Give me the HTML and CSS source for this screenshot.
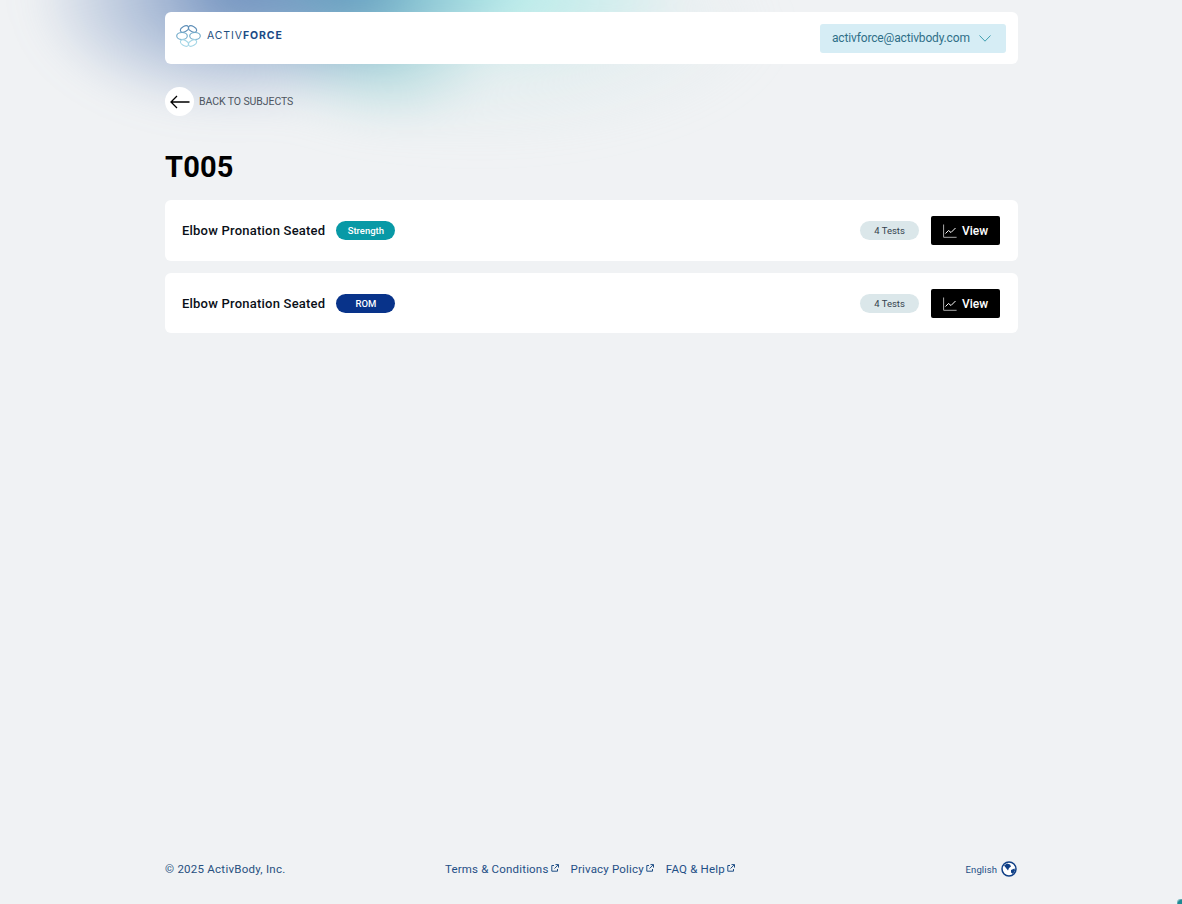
FILE: index.html
```html
<!DOCTYPE html>
<html lang="en">
<head>
<meta charset="utf-8">
<title>T005 - ActivForce</title>
<link rel="stylesheet" href="styles.css">
</head>
<body>
<div class="glow"></div>
<div class="corner"></div>
<div class="page">
  <header class="topbar">
    <a class="logo" href="#">
      <svg class="logo-mark" viewBox="0 0 25 22" width="25" height="22" fill="none" stroke-width="1.100">
        <ellipse cx="8.500" cy="4" rx="4.400" ry="2.700" transform="rotate(-30 8.500 4)" stroke="#5f8fb8"/>
        <ellipse cx="16.500" cy="4" rx="4.400" ry="2.700" transform="rotate(30 16.500 4)" stroke="#5f8fb8"/>
        <ellipse cx="6" cy="11" rx="5.300" ry="3.500" stroke="#6fa9c9"/>
        <ellipse cx="19" cy="11" rx="5.300" ry="3.500" stroke="#6fa9c9"/>
        <ellipse cx="8.500" cy="18" rx="4.400" ry="2.700" transform="rotate(30 8.500 18)" stroke="#a4d6e6"/>
        <ellipse cx="16.500" cy="18" rx="4.400" ry="2.700" transform="rotate(-30 16.500 18)" stroke="#a4d6e6"/>
      </svg>
      <span class="logo-text">ACTIV<b>FORCE</b></span>
    </a>
    <button class="account" type="button">
      <span>activforce@activbody.com</span>
      <svg class="chevron" viewBox="0 0 12 7" width="12" height="7" fill="none" stroke="#3f9fb0" stroke-width="1"><path d="M.5.5 6 6.200 11.500.5"/></svg>
    </button>
  </header>

  <a class="back" href="#">
    <span class="back-circle">
      <svg viewBox="0 0 20 14" width="20" height="14" fill="none" stroke="#000" stroke-width="1.300"><path d="M7 1 1 7l6 6M1 7h18.500"/></svg>
    </span>
    <span class="back-label">BACK TO SUBJECTS</span>
  </a>

  <h1 class="title">T005</h1>

  <main class="list">
    <section class="card">
      <h2 class="name">Elbow Pronation Seated</h2>
      <span class="pill pill-strength">Strength</span>
      <span class="count">4 Tests</span>
      <a class="view" href="#">
        <svg viewBox="0 0 14 14" width="14" height="14" fill="none" stroke="#fff" stroke-width="1"><path d="M.6.5v12.800h13" stroke="#aaa"/><path d="M2.500 9.500 5.500 6.500l2.500 2 4.500-4.500"/></svg>
        View
      </a>
    </section>
    <section class="card">
      <h2 class="name">Elbow Pronation Seated</h2>
      <span class="pill pill-rom">ROM</span>
      <span class="count">4 Tests</span>
      <a class="view" href="#">
        <svg viewBox="0 0 14 14" width="14" height="14" fill="none" stroke="#fff" stroke-width="1"><path d="M.6.5v12.800h13" stroke="#aaa"/><path d="M2.500 9.500 5.500 6.500l2.500 2 4.500-4.500"/></svg>
        View
      </a>
    </section>
  </main>

  <footer class="footer">
    <span class="copyright">© 2025 ActivBody, Inc.</span>
    <nav class="links">
      <a href="#">Terms &amp; Conditions<svg class="ext" viewBox="0 0 8 8" width="8" height="8" fill="none" stroke="#1f4f86" stroke-width="1"><path d="M3 1.500H.8v5.700h5.700V5M4.500.6h3v3M7.300.8 3.500 4.500"/></svg></a>
      <a href="#">Privacy Policy<svg class="ext" viewBox="0 0 8 8" width="8" height="8" fill="none" stroke="#1f4f86" stroke-width="1"><path d="M3 1.500H.8v5.700h5.700V5M4.500.6h3v3M7.300.8 3.500 4.500"/></svg></a>
      <a href="#">FAQ &amp; Help<svg class="ext" viewBox="0 0 8 8" width="8" height="8" fill="none" stroke="#1f4f86" stroke-width="1"><path d="M3 1.500H.8v5.700h5.700V5M4.500.6h3v3M7.300.8 3.500 4.500"/></svg></a>
    </nav>
    <span class="lang">English
      <svg viewBox="0 0 16 16" width="16" height="16"><circle cx="8" cy="8" r="7" fill="#fff" stroke="#0f3f86" stroke-width="1.500"/><path d="M3 4.500 6 2.500l3 1 1 2-2 1.500-1 2.500-2-2.500zM10 9l3.500-1.500.5 2-2 3.500-2-1.500z" fill="#0f3f86"/></svg>
    </span>
  </footer>
</div>
</body>
</html>
```
FILE: styles.css
```css
* { box-sizing: border-box; }
html, body { margin: 0; height: 100%; overflow: hidden; }
body {
  background: #f0f2f4;
  font-family: "Roboto", "Liberation Sans", sans-serif;
  color: #000;
  position: relative;
}
a { color: inherit; text-decoration: none; }

.glow {
  position: absolute;
  left: -60px; top: -80px;
  width: 900px; height: 230px;
  pointer-events: none;
  filter: blur(18px);
  background:
    radial-gradient(ellipse 200px 120px at 290px 75px, rgba(90,125,180,.8), rgba(90,125,180,.42) 45%, rgba(90,125,180,0) 100%),
    radial-gradient(ellipse 170px 80px at 410px 70px, rgba(70,155,185,.85), rgba(70,155,185,0) 100%),
    radial-gradient(ellipse 110px 60px at 445px 145px, rgba(120,195,200,.45), rgba(120,195,200,0) 100%),
    radial-gradient(ellipse 190px 70px at 560px 75px, rgba(170,235,232,.85), rgba(170,235,232,0) 100%),
    radial-gradient(ellipse 300px 120px at 540px 105px, rgba(195,228,228,.42), rgba(195,228,228,0) 100%);
}
.corner {
  position: absolute;
  right: 0; bottom: 0;
  width: 5px; height: 5px;
  background: radial-gradient(circle at 100% 100%, #1e8a94 0, #1e8a94 55%, rgba(30,138,148,0) 90%);
}

.page {
  position: relative;
  width: 853px;
  height: 904px;
  margin-left: 165px;
  padding-top: 12px;
  display: flex;
  flex-direction: column;
}

.topbar {
  height: 52px;
  background: #fff;
  border-radius: 6px;
  display: flex;
  align-items: center;
  justify-content: space-between;
  padding: 0 12px 0 11px;
}
.logo { display: flex; align-items: center; gap: 6px; margin-top: -5px; }
.logo-mark { display: block; }
.logo-text {
  font-family: "Inter", sans-serif;
  font-size: 10.500px;
  letter-spacing: .9px;
  color: #1f4f80;
  font-weight: 400;
}
.logo-text b { font-weight: 700; color: #1b4a86; }
.account {
  width: 186px;
  height: 29px;
  border: 0;
  border-radius: 3px;
  background: #d6edf5;
  color: #2f6f88;
  font: 400 12px "Roboto", sans-serif;
  letter-spacing: -.16px;
  display: flex;
  align-items: center;
  justify-content: space-between;
  padding: 0 15px 0 12px;
}
.chevron { flex: none; }

.back {
  display: flex;
  align-items: center;
  gap: 5px;
  margin-top: 23px;
  height: 29px;
}
.back-circle {
  width: 29px; height: 29px;
  border-radius: 50%;
  background: #fff;
  display: flex;
  align-items: center;
  justify-content: center;
}
.back-label { font-size: 10.500px; color: #4d5560; letter-spacing: -.08px; }

.title {
  margin: 32px 0 0;
  height: 39px;
  font-size: 29px;
  line-height: 39px;
  font-weight: 700;
  color: #000;
  letter-spacing: .2px;
}

.list { display: flex; flex-direction: column; gap: 12px; margin-top: 13px; }
.card {
  height: 61px;
  background: #fff;
  border-radius: 6px;
  display: flex;
  align-items: center;
  padding: 0 18px 0 17px;
}
.card + .card { height: 60px; }
.name { margin: 0; font-size: 13px; font-weight: 500; color: #0a0f18; letter-spacing: .22px; }
.pill {
  margin-left: 11px;
  width: 59px;
  height: 19px;
  border-radius: 10px;
  color: #fff;
  font-size: 9.500px;
  font-weight: 500;
  display: flex;
  align-items: center;
  justify-content: center;
}
.pill-strength { background: #0899a6; }
.pill-rom { background: #08338a; }
.count {
  margin-left: auto;
  width: 59px;
  height: 19px;
  border-radius: 10px;
  background: #dbe7ea;
  color: #35424e;
  font-size: 9.500px;
  display: flex;
  align-items: center;
  justify-content: center;
}
.view {
  margin-left: 12px;
  width: 69px;
  height: 29px;
  padding-top: 1px;
  background: #000;
  border-radius: 2px;
  color: #fff;
  font-size: 12px;
  line-height: 28px;
  font-weight: 500;
  display: flex;
  align-items: center;
  justify-content: center;
  gap: 5px;
}

.footer {
  margin-top: auto;
  margin-bottom: 26px;
  height: 18px;
  display: flex;
  align-items: center;
  justify-content: space-between;
  color: #1f4f86;
  font-size: 11.500px;
}
.copyright { width: 268px; letter-spacing: .25px; color: #27507f; }
.links { display: flex; gap: 12px; margin-right: auto; margin-left: 12px; letter-spacing: .18px; }
.links a { display: flex; align-items: center; gap: 2px; }
.ext { display: block; margin-top: -2px; }
.lang { display: flex; align-items: center; gap: 4px; font-size: 9.500px; letter-spacing: .1px; margin-right: 1px; }
```
